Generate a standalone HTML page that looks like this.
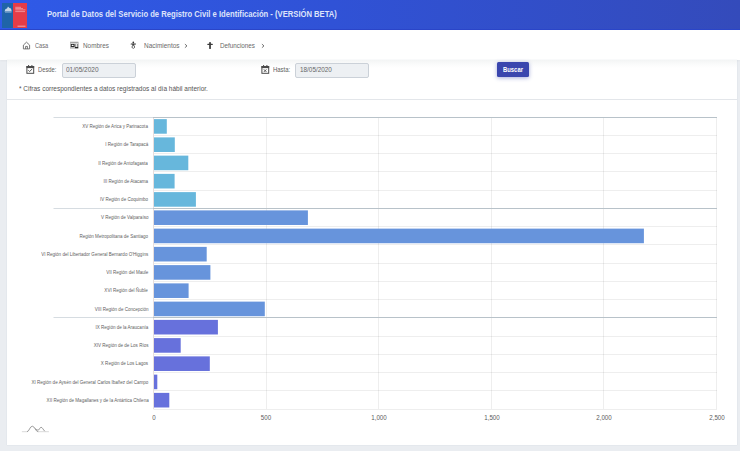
<!DOCTYPE html>
<html><head><meta charset="utf-8">
<style>
*{box-sizing:border-box;margin:0;padding:0}
html,body{width:740px;height:451px;overflow:hidden;background:#eaedf1;font-family:"Liberation Sans",sans-serif}
.abs{position:absolute;white-space:nowrap}
#hdr{position:absolute;left:0;top:0;width:740px;height:30px;background:linear-gradient(90deg,#2f5ae8 0%,#3052d6 45%,#344bbb 100%);box-shadow:inset 0 -1px 0 #2a45c8}
#nav{position:absolute;left:0;top:30px;width:740px;height:30px;background:#fff;box-shadow:0 1px 2px rgba(0,0,0,0.04)}
#card{position:absolute;left:7px;top:60px;width:730px;height:385px;box-shadow:0 0 1px rgba(60,80,100,0.18);background:linear-gradient(180deg,#f3f5f5 0px,#fafbfb 4px,#fff 8px)}
.sx{display:inline-block;transform-origin:0 50%}
.nt{position:absolute;top:40.5px;font-size:7.5px;color:#6a6a6a;white-space:nowrap;line-height:9px}
.lbl{position:absolute;right:591.8px;font-size:5.1px;line-height:8px;color:#606060;white-space:nowrap;transform:scaleX(0.89);transform-origin:100% 50%}
.axl{position:absolute;top:413px;width:60px;text-align:center;font-size:6.6px;line-height:9px;color:#5c5c5c;transform:scaleX(0.94);white-space:nowrap}
.inp{position:absolute;top:63px;height:14.5px;background:#edf0f3;border:1px solid #cbd1d8;border-radius:2px}
.dt{position:absolute;top:65px;font-size:7px;line-height:9px;color:#5e5e5e;white-space:nowrap}
</style></head><body>
<div id="hdr">
  <div class="abs" style="left:2px;top:3px;width:11px;height:25px;background:#1f64a8"></div>
  <div class="abs" style="left:13px;top:3px;width:14px;height:25px;background:#e63c48"></div>
  <svg class="abs" style="left:2px;top:3px" width="25" height="25" viewBox="0 0 25 25"><path d="M2.5 8.5 L3.5 6 L5 5.5 L6 3.5 L7.5 5 L9 5.5 L9.8 8.5 Z" fill="#dfe7f3" opacity="0.85"/><path d="M3 9.3 H9.5" stroke="#dfe7f3" stroke-width="0.6" opacity="0.7"/><path d="M13.3 4.3 H19 M13.3 5.6 H21 M13.3 6.9 H23.5 M13.3 8.6 H23" stroke="#f6c6ca" stroke-width="0.6"/><path d="M15.5 23.2 H23.5" stroke="#f6c6ca" stroke-width="0.8"/></svg>
  <div class="abs" style="left:47px;top:8px;font-size:9.8px;font-weight:bold;color:#dde3fa"><span class="sx" style="transform:scaleX(0.78)">Portal de Datos del Servicio de Registro Civil e Identificación - (VERSIÓN BETA)</span></div>
</div>
<div id="nav"></div>
<div id="card"></div>
<!-- nav items -->
<svg class="abs" style="left:22px;top:41px" width="9" height="9" viewBox="0 0 9 9"><path d="M1.4 7.9 V4.1 L4.5 1.2 L7.6 4.1 V7.9 Z M3.6 7.9 V5.4 H5.4 V7.9" fill="none" stroke="#606060" stroke-width="0.85" stroke-linejoin="round"/></svg>
<div class="nt" style="left:35.3px"><span class="sx" style="transform:scaleX(0.75)">Casa</span></div>
<svg class="abs" style="left:70px;top:41px" width="9" height="8" viewBox="0 0 9 8"><rect x="0.3" y="1.0" width="7.9" height="6.2" fill="#e4e4e4" stroke="#9a9a9a" stroke-width="0.5"/><rect x="0.6" y="1.2" width="7.3" height="1.0" fill="#999"/><rect x="0.8" y="3.0" width="3.8" height="3.2" fill="#2e2e2e"/><ellipse cx="2.6" cy="4.4" rx="1.0" ry="0.7" fill="#fff"/><path d="M5.2 3.0 V6.4 M7.6 3.0 V6.4" stroke="#555" stroke-width="0.7"/><rect x="5.0" y="6.0" width="3.1" height="1.2" fill="#222"/></svg>
<div class="nt" style="left:83.2px"><span class="sx" style="transform:scaleX(0.85)">Nombres</span></div>
<svg class="abs" style="left:130px;top:41px" width="7" height="8" viewBox="0 0 7 8"><ellipse cx="3.3" cy="1.5" rx="0.85" ry="1.05" fill="#333"/><path d="M1.2 2.95 H5.5" stroke="#3a3a3a" stroke-width="1.1" stroke-linecap="round"/><ellipse cx="3.3" cy="3.9" rx="1.3" ry="0.85" fill="#3a3a3a"/><path d="M2.1 5.6 Q1.9 6.7 2.6 7.2 M4.5 5.6 Q4.7 6.7 4.0 7.2" stroke="#3a3a3a" stroke-width="1" fill="none" stroke-linecap="round"/></svg>
<div class="nt" style="left:143.6px"><span class="sx" style="transform:scaleX(0.86)">Nacimientos</span></div>
<svg class="abs" style="left:183px;top:42px" width="6" height="7" viewBox="0 0 6 7"><path d="M1.9 2.1 L4.0 3.9 L1.9 5.7" fill="none" stroke="#555" stroke-width="0.8"/></svg>
<svg class="abs" style="left:206px;top:41px" width="8" height="9" viewBox="0 0 8 9"><rect x="3.15" y="1" width="1.75" height="7.0" rx="0.4" fill="#3c3c3c"/><rect x="1.3" y="2.85" width="5.5" height="1.2" rx="0.5" fill="#3c3c3c"/></svg>
<div class="nt" style="left:220px"><span class="sx" style="transform:scaleX(0.84)">Defunciones</span></div>
<svg class="abs" style="left:259.5px;top:42px" width="6" height="7" viewBox="0 0 6 7"><path d="M1.9 2.1 L4.0 3.9 L1.9 5.7" fill="none" stroke="#555" stroke-width="0.8"/></svg>
<!-- date row -->
<svg class="abs" style="left:26px;top:65px" width="9" height="9" viewBox="0 0 9 9"><rect x="0.9" y="1.5" width="6.8" height="6.8" fill="none" stroke="#4a4a4a" stroke-width="1"/><rect x="0.5" y="1.0" width="7.6" height="2.1" fill="#4a4a4a"/><path d="M2.6 0 V1.6 M5.9 0 V1.6" stroke="#4a4a4a" stroke-width="1"/><path d="M2.3 5.3 L3.6 6.5 L6.2 4.0" stroke="#4a4a4a" stroke-width="0.95" fill="none"/></svg>
<div class="dt" style="left:37.5px"><span class="sx" style="transform:scaleX(0.83)">Desde:</span></div>
<div class="inp" style="left:62px;width:74px"></div>
<div class="dt" style="left:66px;color:#666"><span class="sx" style="transform:scaleX(0.93)">01/05/2020</span></div>
<svg class="abs" style="left:261px;top:65px" width="9" height="9" viewBox="0 0 9 9"><rect x="0.9" y="1.5" width="6.8" height="6.8" fill="none" stroke="#4a4a4a" stroke-width="1"/><rect x="0.5" y="1.0" width="7.6" height="2.1" fill="#4a4a4a"/><path d="M2.6 0 V1.6 M5.9 0 V1.6" stroke="#4a4a4a" stroke-width="1"/><path d="M2.9 4.4 L5.4 6.9 M5.4 4.4 L2.9 6.9" stroke="#4a4a4a" stroke-width="0.95" fill="none"/></svg>
<div class="dt" style="left:272.8px"><span class="sx" style="transform:scaleX(0.85)">Hasta:</span></div>
<div class="inp" style="left:295px;width:74px"></div>
<div class="dt" style="left:299.7px;color:#666"><span class="sx" style="transform:scaleX(0.91)">18/05/2020</span></div>
<div class="abs" style="left:497px;top:62px;width:32px;height:15px;background:#3a46ae;border-radius:1.5px;box-shadow:0 1px 4px rgba(58,70,174,0.45)"></div>
<div class="abs" style="left:503px;top:64.5px;font-size:7px;line-height:9px;font-weight:bold;color:#fff"><span class="sx" style="transform:scaleX(0.84)">Buscar</span></div>
<div class="abs" style="left:19px;top:84px;font-size:7px;line-height:9px;color:#555"><span class="sx" style="transform:scaleX(0.93)">* Cifras correspondientes a datos registrados al día hábil anterior.</span></div>
<div class="abs" style="left:7px;top:99px;width:730px;height:1px;background:#e3e6ea"></div>
<!-- chart -->
<svg class="abs" style="left:0;top:0" width="740" height="451" viewBox="0 0 740 451"><line x1="153.5" y1="135.5" x2="717.0" y2="135.5" stroke="#000" stroke-opacity="0.065" stroke-width="1"/><line x1="153.5" y1="153.5" x2="717.0" y2="153.5" stroke="#000" stroke-opacity="0.065" stroke-width="1"/><line x1="153.5" y1="171.5" x2="717.0" y2="171.5" stroke="#000" stroke-opacity="0.065" stroke-width="1"/><line x1="153.5" y1="190.5" x2="717.0" y2="190.5" stroke="#000" stroke-opacity="0.065" stroke-width="1"/><line x1="153.5" y1="226.5" x2="717.0" y2="226.5" stroke="#000" stroke-opacity="0.065" stroke-width="1"/><line x1="153.5" y1="244.5" x2="717.0" y2="244.5" stroke="#000" stroke-opacity="0.065" stroke-width="1"/><line x1="153.5" y1="263.5" x2="717.0" y2="263.5" stroke="#000" stroke-opacity="0.065" stroke-width="1"/><line x1="153.5" y1="281.5" x2="717.0" y2="281.5" stroke="#000" stroke-opacity="0.065" stroke-width="1"/><line x1="153.5" y1="299.5" x2="717.0" y2="299.5" stroke="#000" stroke-opacity="0.065" stroke-width="1"/><line x1="153.5" y1="336.5" x2="717.0" y2="336.5" stroke="#000" stroke-opacity="0.065" stroke-width="1"/><line x1="153.5" y1="354.5" x2="717.0" y2="354.5" stroke="#000" stroke-opacity="0.065" stroke-width="1"/><line x1="153.5" y1="372.5" x2="717.0" y2="372.5" stroke="#000" stroke-opacity="0.065" stroke-width="1"/><line x1="153.5" y1="390.5" x2="717.0" y2="390.5" stroke="#000" stroke-opacity="0.065" stroke-width="1"/><line x1="153.5" y1="409.5" x2="717.0" y2="409.5" stroke="#000" stroke-opacity="0.065" stroke-width="1"/><line x1="266.5" y1="117.0" x2="266.5" y2="409" stroke="#000" stroke-opacity="0.065" stroke-width="1"/><line x1="378.5" y1="117.0" x2="378.5" y2="409" stroke="#000" stroke-opacity="0.065" stroke-width="1"/><line x1="491.5" y1="117.0" x2="491.5" y2="409" stroke="#000" stroke-opacity="0.065" stroke-width="1"/><line x1="603.5" y1="117.0" x2="603.5" y2="409" stroke="#000" stroke-opacity="0.065" stroke-width="1"/><line x1="716.5" y1="117.0" x2="716.5" y2="409" stroke="#000" stroke-opacity="0.065" stroke-width="1"/><line x1="153.5" y1="117.0" x2="153.5" y2="409" stroke="#e6dede" stroke-width="1"/><rect x="154" y="119.12" width="12.80" height="14.60" fill="#67b7dc"/><rect x="154" y="137.38" width="20.80" height="14.60" fill="#67b7dc"/><rect x="154" y="155.62" width="34.30" height="14.60" fill="#67b7dc"/><rect x="154" y="173.88" width="20.60" height="14.60" fill="#67b7dc"/><rect x="154" y="192.12" width="41.90" height="14.60" fill="#67b7dc"/><rect x="154" y="210.38" width="153.90" height="14.60" fill="#6794dc"/><rect x="154" y="228.62" width="489.90" height="14.60" fill="#6794dc"/><rect x="154" y="246.88" width="52.70" height="14.60" fill="#6794dc"/><rect x="154" y="265.12" width="56.40" height="14.60" fill="#6794dc"/><rect x="154" y="283.38" width="34.60" height="14.60" fill="#6794dc"/><rect x="154" y="301.62" width="110.80" height="14.60" fill="#6794dc"/><rect x="154" y="319.88" width="63.90" height="14.60" fill="#6771dc"/><rect x="154" y="338.12" width="26.70" height="14.60" fill="#6771dc"/><rect x="154" y="356.38" width="55.80" height="14.60" fill="#6771dc"/><rect x="154" y="374.62" width="3.30" height="14.60" fill="#6771dc"/><rect x="154" y="392.88" width="15.30" height="14.60" fill="#6771dc"/><line x1="53.5" y1="117.5" x2="153" y2="117.5" stroke="#d6dce1" stroke-width="1"/><line x1="153" y1="117.5" x2="717.0" y2="117.5" stroke="#b8c2c9" stroke-width="1"/><line x1="53.5" y1="208.5" x2="153" y2="208.5" stroke="#d6dce1" stroke-width="1"/><line x1="153" y1="208.5" x2="717.0" y2="208.5" stroke="#b8c2c9" stroke-width="1"/><line x1="53.5" y1="317.5" x2="153" y2="317.5" stroke="#d6dce1" stroke-width="1"/><line x1="153" y1="317.5" x2="717.0" y2="317.5" stroke="#b8c2c9" stroke-width="1"/></svg>
<div class="lbl" style="top:122.12px">XV Región de Arica y Parinacota</div>
<div class="lbl" style="top:140.38px">I Región de Tarapacá</div>
<div class="lbl" style="top:158.62px">II Región de Antofagasta</div>
<div class="lbl" style="top:176.88px">III Región de Atacama</div>
<div class="lbl" style="top:195.12px">IV Región de Coquimbo</div>
<div class="lbl" style="top:213.38px">V Región de Valparaíso</div>
<div class="lbl" style="top:231.62px">Región Metropolitana de Santiago</div>
<div class="lbl" style="top:249.88px">VI Región del Libertador General Bernardo O&#39;Higgins</div>
<div class="lbl" style="top:268.12px">VII Región del Maule</div>
<div class="lbl" style="top:286.38px">XVI Región del Ñuble</div>
<div class="lbl" style="top:304.62px">VIII Región de Concepción</div>
<div class="lbl" style="top:322.88px">IX Región de la Araucanía</div>
<div class="lbl" style="top:341.12px">XIV Región de de Los Ríos</div>
<div class="lbl" style="top:359.38px">X Región de Los Lagos</div>
<div class="lbl" style="top:377.62px">XI Región de Aysén del General Carlos Ibañez del Campo</div>
<div class="lbl" style="top:395.88px">XII Región de Magallanes y de la Antártica Chilena</div>
<div class="axl" style="left:123.80px">0</div>
<div class="axl" style="left:236.10px">500</div>
<div class="axl" style="left:349.20px">1,000</div>
<div class="axl" style="left:461.60px">1,500</div>
<div class="axl" style="left:574.10px">2,000</div>
<div class="axl" style="left:686.50px">2,500</div>
<svg class="abs" style="left:20px;top:423px" width="32" height="12" viewBox="0 0 32 12"><path d="M1.9 8.7 H7.5 M17.5 8.7 H28.9" stroke="#cfcfcf" stroke-width="0.8" fill="none"/><path d="M7 8.7 C9.2 8.7 9.8 3.2 12.3 3.2 C14.8 3.2 15.6 8.7 18.2 8.7" stroke="#8a8a8a" stroke-width="0.85" fill="none"/><path d="M15.3 5.6 C16.3 6.6 17.5 7.4 18.7 6.9 C19.6 6.2 20 4.3 21.1 4.3 C22.4 4.3 23.2 6.8 24.8 8.2" stroke="#8a8a8a" stroke-width="0.85" fill="none"/></svg>
</body></html>
